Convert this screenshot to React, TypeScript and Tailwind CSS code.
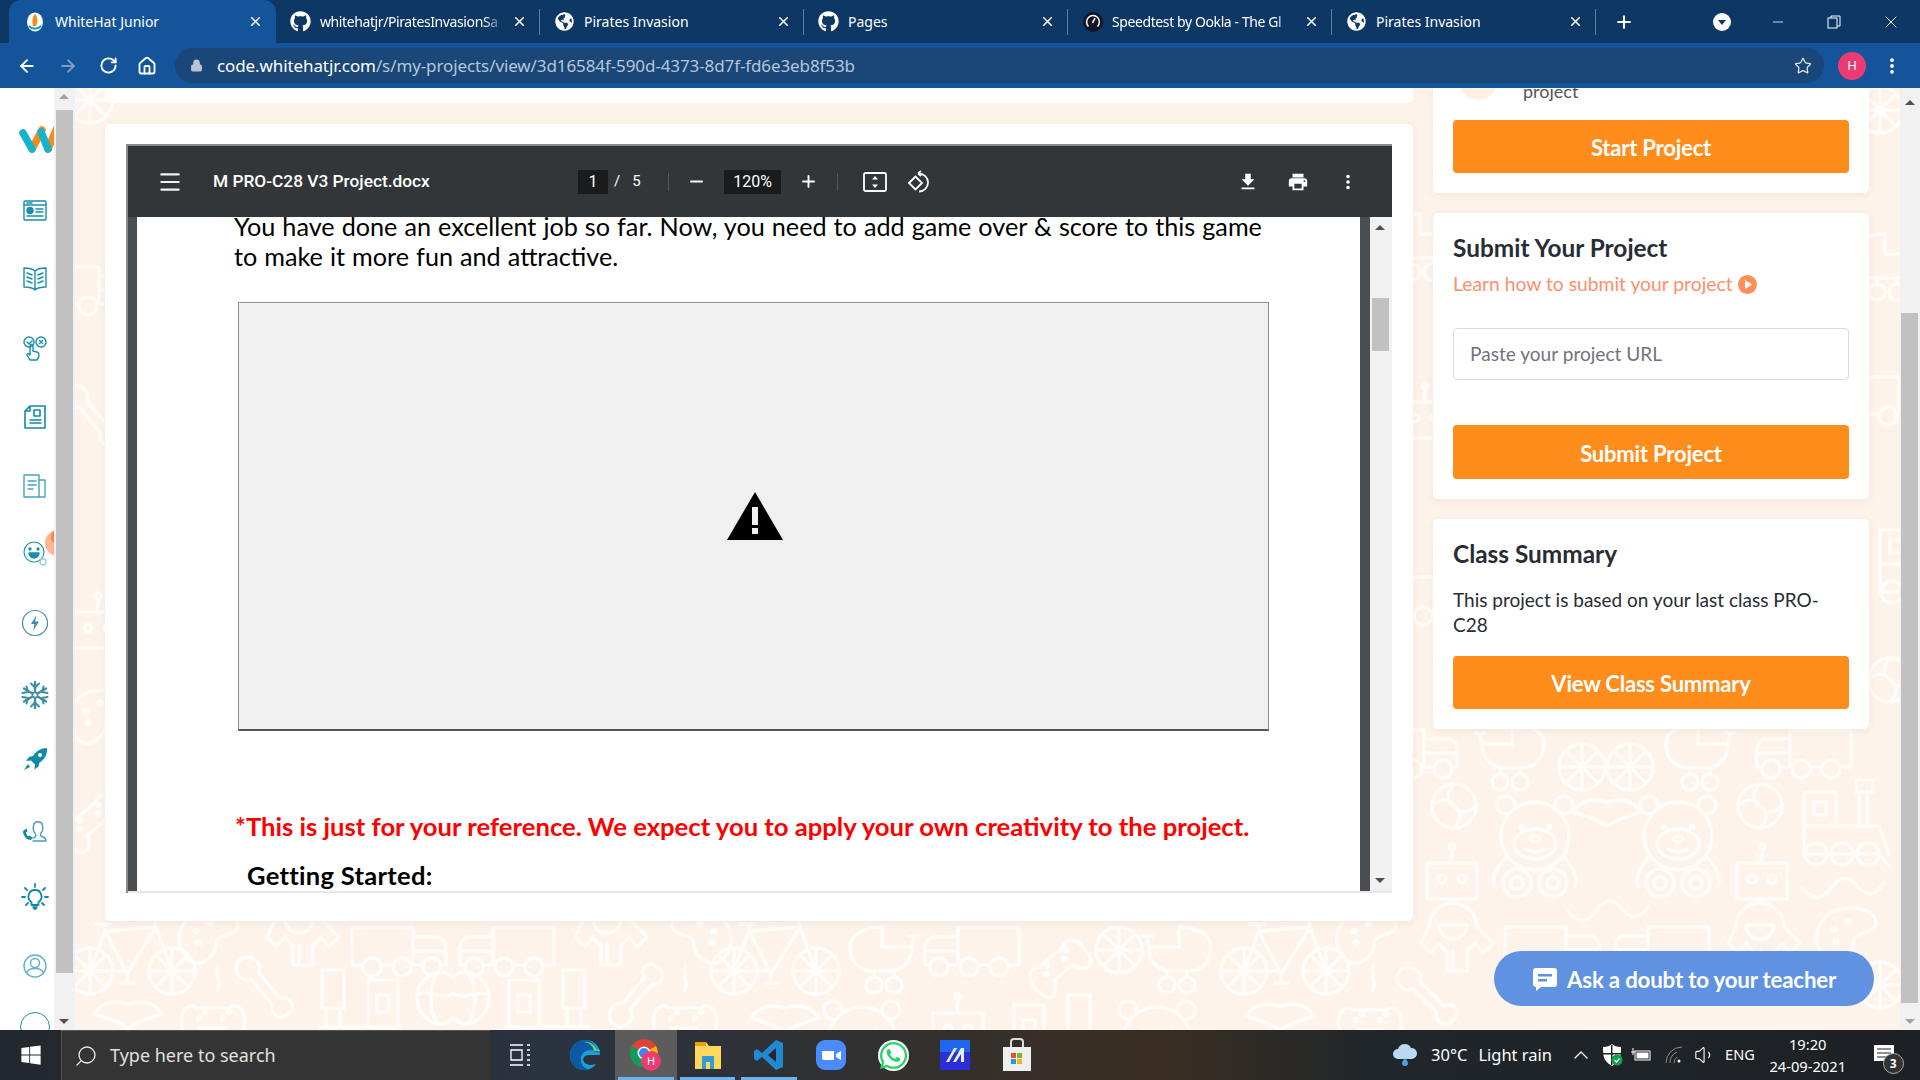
import {
  ArrowLeft,
  ArrowRight,
  ChevronUp,
  Home,
  Lock,
  Menu,
  Minus,
  MoreVertical,
  Plus,
  RotateCw,
  Search,
  Star,
  Volume1,
  X,
} from "lucide-react";
import { FaGithub, FaGlobeAmericas, FaWhatsapp, FaWindows } from "react-icons/fa";
import type { ReactNode } from "react";

const teal = "#1a8fab";

function WhiteHatFavicon() {
  return (
    <svg width="18" height="20" viewBox="0 0 18 20">
      <ellipse cx="9" cy="10" rx="8" ry="9.5" fill="#fff" />
      <path d="M9 2c3 3 3 8 1 12H7C6 10 6 5 9 2z" fill="#f58a1f" />
      <path d="M3 14a8 8 0 0 0 12 0" stroke="#18a2b8" strokeWidth="2" fill="none" />
    </svg>
  );
}

function SpeedtestFavicon() {
  return (
    <svg width="20" height="20" viewBox="0 0 20 20">
      <circle cx="10" cy="10" r="10" fill="#141526" />
      <path d="M5.5 14.5a6.4 6.4 0 1 1 9 0" stroke="#fff" strokeWidth="1.5" fill="none" />
      <path d="M9.4 11.2l2.6-5" stroke="#fff" strokeWidth="1.6" />
    </svg>
  );
}

const tabs: { title: string; icon: ReactNode; fade?: boolean }[] = [
  { title: "whitehatjr/PiratesInvasionSa", icon: <FaGithub size={21} color="#fff" />, fade: true },
  { title: "Pirates Invasion", icon: <FaGlobeAmericas size={19} color="#fff" /> },
  { title: "Pages", icon: <FaGithub size={21} color="#fff" /> },
  { title: "Speedtest by Ookla - The Gl", icon: <SpeedtestFavicon />, fade: true },
  { title: "Pirates Invasion", icon: <FaGlobeAmericas size={19} color="#fff" /> },
];

function BrowserChrome() {
  return (
    <header className="h-[88px] shrink-0 text-white [font-family:'Noto_Sans',sans-serif]">
      <div className="flex h-[43px] items-end bg-[#0d3764] pl-[9px]">
        <div className="flex h-[43px] w-[267px] items-center rounded-t-xl bg-[#14549a] pl-[17px] pr-[13px]">
          <WhiteHatFavicon />
          <span className="ml-[11px] flex-1 text-[14px]">WhiteHat Junior</span>
          <X size={15} strokeWidth={2.5} />
        </div>
        {tabs.map((tab, i) => (
          <div key={i} className="flex h-[43px] w-[264px] items-center pl-[14px]">
            <span className="flex w-[21px] justify-center">{tab.icon}</span>
            <span
              className={
                tab.fade
                  ? "ml-[9px] w-[185px] overflow-hidden whitespace-nowrap text-[14px] tracking-[-0.4px] [mask-image:linear-gradient(90deg,#000_88%,transparent)]"
                  : "ml-[9px] w-[185px] overflow-hidden whitespace-nowrap text-[14px]"
              }
            >
              {tab.title}
            </span>
            <X size={15} strokeWidth={2.5} className="ml-auto" />
            <div className="ml-[12px] h-[26px] w-px shrink-0 bg-[#5f7d9c]" />
          </div>
        ))}
        <div className="flex h-[43px] flex-1 items-center">
          <Plus size={20} strokeWidth={2.5} className="ml-[18px]" />
          <svg width="18" height="18" viewBox="0 0 18 18" className="ml-[79px]">
            <circle cx="9" cy="9" r="9" fill="#fff" />
            <path d="M5 7h8l-4 5z" fill="#0d3764" />
          </svg>
          <Minus size={16} strokeWidth={1.2} className="ml-[39px]" />
          <svg width="14" height="14" viewBox="0 0 14 14" className="ml-[41px]" fill="none" stroke="#fff">
            <rect x="1" y="3" width="9" height="10" />
            <path d="M4 3V1h9v10h-3" />
          </svg>
          <X size={20} strokeWidth={1.2} className="ml-[40px]" />
        </div>
      </div>
      <div className="flex h-[45px] items-center bg-[#14549a] pl-[17px]">
        <ArrowLeft size={20} strokeWidth={2.2} />
        <ArrowRight size={20} strokeWidth={2.2} className="ml-[21px] text-[#7b9ec4]" />
        <RotateCw size={19} strokeWidth={2.4} className="ml-[21px]" />
        <Home size={20} strokeWidth={2.2} className="ml-[19px]" />
        <div className="ml-[18px] flex h-[35px] w-[1649px] items-center rounded-full bg-[#1a4778] pl-[15px] pr-[12px]">
          <Lock size={13} fill="#b9c4d0" color="#b9c4d0" />
          <span className="ml-[14px] text-[17px] tracking-[-0.1px] text-[#b6c6d8]">
            <span className="text-white">code.whitehatjr.com</span>
            /s/my-projects/view/3d16584f-590d-4373-8d7f-fd6e3eb8f53b
          </span>
          <Star size={18} strokeWidth={1.7} className="ml-auto text-[#dfe6ee]" />
        </div>
        <div className="ml-[14px] flex h-[28px] w-[28px] items-center justify-center rounded-full bg-[#ec3b72] text-[13px]">
          H
        </div>
        <MoreVertical size={20} strokeWidth={2.6} className="ml-[16px]" />
      </div>
    </header>
  );
}

/* sidebar line icons, all on a 30 box */
function SideIcon({ children, fill = "none", stroke = teal }: { children: ReactNode; fill?: string; stroke?: string }) {
  return (
    <svg width="30" height="30" viewBox="0 0 30 30" fill={fill} stroke={stroke} strokeWidth="1.4" strokeLinecap="round" strokeLinejoin="round">
      {children}
    </svg>
  );
}

const sideIcons: { top: number; icon: ReactNode }[] = [
  {
    top: 196,
    icon: (
      <SideIcon>
        <rect x="4" y="5" width="22" height="19" rx="1" />
        <path d="M4 9h22M7 7h5M16 13h7M16 16h7M7 20h16" />
        <circle cx="10" cy="14.5" r="3" fill={teal} />
      </SideIcon>
    ),
  },
  {
    top: 263,
    icon: (
      <SideIcon>
        <path d="M15 8C12 5 8 5 4 5v19c4 0 8 0 11 3 3-3 7-3 11-3V5c-4 0-8 0-11 3zM15 8v19" />
        <path d="M7 10l5 2M7 14l5 2M7 18l5 2M23 10l-5 2M23 14l-5 2M23 18l-5 2" />
      </SideIcon>
    ),
  },
  {
    top: 334,
    icon: (
      <SideIcon>
        <circle cx="9" cy="8" r="5" />
        <circle cx="21" cy="8" r="5" />
        <path d="M7 8l2 2 3-3M19.5 6.5l3 3M22.5 6.5l-3 3" />
        <path d="M10 26l-3-5c-.6-1 1-2 2-1l1 1v-9c0-2 3-2 3 0v5l4 1c1 .3 2 1 2 3 0 2-1 4-2 5z" />
      </SideIcon>
    ),
  },
  {
    top: 402,
    icon: (
      <SideIcon stroke="#158aa3">
        <path d="M10 4h15v22H5V9zM10 4v5H5" strokeWidth="1.6" />
        <rect x="14" y="8" width="6" height="6" strokeWidth="1.6" />
        <path d="M10 18h11M10 21h11" strokeWidth="1.6" />
      </SideIcon>
    ),
  },
  {
    top: 471,
    icon: (
      <SideIcon stroke="#43a6bb">
        <path d="M4 4h15v22H4zM19 9h6v17h-6" />
        <path d="M8 10h8M8 14h8M8 18h5" />
      </SideIcon>
    ),
  },
  {
    top: 538,
    icon: (
      <SideIcon>
        <circle cx="14" cy="14" r="10" strokeWidth="1.1" />
        <circle cx="10" cy="11" r="1" fill={teal} />
        <circle cx="18" cy="11" r="1" fill={teal} />
        <path d="M9 15h10a5 5 0 0 1-10 0z" fill={teal} />
        <circle cx="23" cy="24" r="3" stroke="#9ad0dc" />
      </SideIcon>
    ),
  },
  {
    top: 608,
    icon: (
      <SideIcon stroke="#3e8ea6">
        <circle cx="15" cy="15" r="12.5" strokeWidth="1.2" />
        <path d="M16.5 7L11 16h3.5L13 23l6-9.5h-4z" fill="#3e8ea6" stroke="none" />
      </SideIcon>
    ),
  },
  {
    top: 680,
    icon: (
      <SideIcon stroke="#3e8ea6">
        <path d="M15 2v26M4 8.5l22 13M26 8.5l-22 13" strokeWidth="2.4" />
        <path d="M11 3.5l4 4 4-4M11 26.5l4-4 4 4M2.5 13l5.5-1-1.5-5.5M27.5 13L22 12l1.5-5.5M2.5 17L8 18l-1.5 5.5M27.5 17L22 18l1.5 5.5" strokeWidth="2" />
        <circle cx="15" cy="15" r="2.5" fill="#fff" strokeWidth="1.5" />
      </SideIcon>
    ),
  },
  {
    top: 745,
    icon: (
      <SideIcon fill="#0e8aa8" stroke="none">
        <path d="M27 3c-6 0-11 3-14 8l-4 1-3 4 5-.5 4 4-.5 5 4-3 1-4c5-3 8-8 7.5-14.5zM8 19l-4 6 6-3z" />
        <circle cx="20" cy="10" r="2" fill="#fff" />
      </SideIcon>
    ),
  },
  {
    top: 815,
    icon: (
      <SideIcon stroke="#3fa3ba">
        <path d="M13 23c4-1 3-3 2-5-2-2-2-6-1-9 1-3 7-3 8 0 1 3 1 7-1 9-1 2-1 3 2 4 3 1 3 3 3 4H13" />
        <path d="M3 16c0 5 4 9 8 9l1.5-2.5-3-2-1.5 1c-1-1-2-3-2-4l1.5-1-1-3z" fill="#0e8aa8" stroke="none" />
      </SideIcon>
    ),
  },
  {
    top: 882,
    icon: (
      <SideIcon stroke="#0e8aa8">
        <path d="M15 8a6.5 6.5 0 0 0-3.5 12v3h7v-3A6.5 6.5 0 0 0 15 8z" strokeWidth="1.8" />
        <path d="M13 25h4l-1 2h-2z" fill="#0e8aa8" />
        <path d="M15 2v3M5 6l2 2M25 6l-2 2M2 15h3M25 15h3M6 23l2-2M24 23l-2-2" strokeWidth="1.8" />
      </SideIcon>
    ),
  },
  {
    top: 951,
    icon: (
      <SideIcon stroke="#62b2c5">
        <circle cx="15" cy="15" r="11" />
        <circle cx="15" cy="12" r="4.5" />
        <path d="M6.5 22c2-6 15-6 17 0" />
      </SideIcon>
    ),
  },
];

function Sidebar() {
  return (
    <aside className="flex h-full w-[75px] shrink-0 bg-white">
      <div className="relative h-full w-[54px] overflow-hidden">
        <div className="absolute left-[45px] top-[442px] h-[26px] w-[26px] rounded-full bg-[#ffb592]" />
        <div className="absolute left-[51px] top-[442px] h-[14px] w-[12px] rounded-full bg-[#f58a4d]" />
        <svg width="36" height="34" viewBox="0 0 36 34" className="absolute left-[18px] top-[34px]" fill="none" strokeLinecap="round" strokeWidth="7.5">
          <path d="M14 27L24 8" stroke="#f58a1f" />
          <path d="M30 27L39 6" stroke="#f58a1f" />
          <path d="M5 11l9 16" stroke="#14b4cc" />
          <path d="M23 10l7 17" stroke="#14b4cc" />
        </svg>
        {sideIcons.map((item) => (
          <div key={item.top} className="absolute left-[20px]" style={{ top: item.top - 88 }}>
            {item.icon}
          </div>
        ))}
        <div className="absolute left-[20px] top-[924px] h-[30px] w-[30px] rounded-full border-[1.5px] border-[#1a8fab]" />
      </div>
      <Scrollbar thumbTop={22} thumbHeight={863} />
    </aside>
  );
}

function Scrollbar({ thumbTop, thumbHeight }: { thumbTop: number; thumbHeight: number }) {
  return (
    <div className="relative h-full w-[21px] shrink-0 bg-[#f1f1f1]">
      <div className="absolute left-[5px] top-[6px] h-0 w-0 border-x-[5px] border-b-[5px] border-x-transparent border-b-[#a3a3a3]" />
      <div className="absolute left-[2px] w-[17px] bg-[#c1c1c1]" style={{ top: thumbTop, height: thumbHeight }} />
      <div className="absolute bottom-[6px] left-[5px] h-0 w-0 border-x-[5px] border-t-[5px] border-x-transparent border-t-[#505050]" />
    </div>
  );
}

/* background toys */
const Teddy = () => (
  <g>
    <circle cx="-29" cy="-31" r="9" />
    <circle cx="29" cy="-31" r="9" />
    <circle cx="0" cy="0" r="34" fill="#fef3ea" />
    <ellipse cx="0" cy="8" rx="21" ry="15" />
    <ellipse cx="0" cy="3" rx="5" ry="3" />
    <path d="M-9 13c5 4 13 4 18 0" />
    <circle cx="-14" cy="-9" r="1.5" />
    <circle cx="14" cy="-9" r="1.5" />
    <path d="M-28 20c-10 10-16 24-12 30M28 20c10 10 16 24 12 30" />
    <circle cx="-18" cy="47" r="14" />
    <circle cx="18" cy="47" r="14" />
    <circle cx="-18" cy="47" r="6" />
    <circle cx="18" cy="47" r="6" />
  </g>
);
const Robot = () => (
  <g>
    <rect x="-25" y="-18" width="50" height="36" />
    <circle cx="-10" cy="-2" r="4" />
    <circle cx="10" cy="-2" r="4" />
    <path d="M0 -18c-3-6 2-8 0-14" />
    <circle cx="0" cy="-34" r="3" />
  </g>
);
const Ball = () => (
  <g>
    <circle r="22" />
    <path d="M0 -22c-8 8-8 16 0 22 8 6 8 14 0 22M-22 0c8-8 16-8 22 0 6 8 14 8 22 0" />
  </g>
);
const Train = () => (
  <g>
    <rect x="0" y="0" width="32" height="34" />
    <rect x="10" y="10" width="12" height="13" />
    <path d="M0 34v28h75l10 12M55 34V0M63 34V0M52 -12h17v12H52zM32 34h43l10 28" />
    <circle cx="12" cy="62" r="11" />
    <circle cx="38" cy="62" r="11" />
    <circle cx="64" cy="62" r="11" />
  </g>
);
const Stroller = () => (
  <g>
    <path d="M0 -26V-6H30C30 8 20 18 8 18H-10C-24 18-32 6-32-6C-32-18-18-26 0-26Z" />
    <path d="M30 -6L32 -16M27 -17H37M-8 18v6M12 18v6" />
    <circle cx="-8" cy="32" r="8" />
    <circle cx="12" cy="32" r="8" />
  </g>
);
const Wheel = ({ r = 23 }: { r?: number }) => (
  <g>
    <circle r={r} />
    <path d={`M${-r} 0H${r}M0 ${-r}V${r}M${-r * 0.7} ${-r * 0.7}L${r * 0.7} ${r * 0.7}M${r * 0.7} ${-r * 0.7}L${-r * 0.7} ${r * 0.7}`} />
  </g>
);
const Bike = () => (
  <g>
    <g transform="translate(-41 0)"><Wheel /></g>
    <g transform="translate(41 0)"><Wheel /></g>
    <path d="M-41 0L-26 -40L25 -44L41 0M-26 -40L-4 3L25 -44M-36 -47H-20M-26 -40V-47M25 -44L23 -52M-4 3V11M-10 12H3M-41 0H-4" />
  </g>
);
const Truck = () => (
  <g>
    <path d="M-47 14V-23H14V14M14 -14H36C43 -14 47 -10 47 -3V14M14 0H47M-47 14H47" />
    <circle cx="-27" cy="16" r="9" fill="#fef3ea" />
    <circle cx="3" cy="16" r="9" fill="#fef3ea" />
    <circle cx="33" cy="16" r="9" fill="#fef3ea" />
  </g>
);
const Creature = () => (
  <g>
    <path d="M-24 10a24 24 0 0 1 48 0l16 16-10 10-8-10c-4 6-8 8-8 8v20h-20V34s-4-2-8-8l-8 10-10-10z" />
    <path d="M-14 8h28a14 14 0 0 1-28 0zM0 34v20" />
  </g>
);
const Palette = () => (
  <g>
    <path d="M-20 26c-20-14-12-46 14-50 20-4 34 4 34 14 0 12-24 8-22 20 1 8-14 24-26 16z" />
    <circle cx="-14" cy="-4" r="2" />
    <circle cx="0" cy="-12" r="2" />
    <circle cx="-12" cy="8" r="2" />
  </g>
);
const Gamepad = ({ angle = -40 }: { angle?: number }) => (
  <g transform={`rotate(${angle})`}>
    <path d="M-30 14c-6-24 8-30 14-24h32c6-6 20 0 14 24-2 12-14 8-18-4h-24c-4 12-16 16-18 4z" />
    <circle cx="10" cy="0" r="1.5" />
    <circle cx="16" cy="-6" r="1.5" />
    <circle cx="-14" cy="0" r="1.5" />
    <circle cx="-8" cy="-6" r="1.5" />
  </g>
);
const Cord = () => <path d="M0 -24c-4 8 4 12 0 24" />;
const Bone = ({ angle = 50 }: { angle?: number }) => (
  <g transform={`rotate(${angle})`}>
    <path d="M-20 -6h34c2-10 18-8 16 4 2 12-14 14-16 6h-34c-4 12-22 8-22-4 0-12 18-16 22-6z" />
  </g>
);
const Bat = () => (
  <g>
    <path d="M-34 2c8-12 20-14 34-10 14-4 26-2 34 10-12 4-22 6-34 14-12-8-22-10-34-14z" />
  </g>
);
const Squiggle = () => <path d="M-40 0c10 14 20 14 30 0s18-10 26 0 18 8 26-4" />;
const Tower = () => (
  <g>
    <rect x="0" y="0" width="22" height="38" />
    <path d="M4 38V57M18 38V57M-4 57H80" />
    <rect x="46" y="10" width="30" height="47" />
    <rect x="55" y="25" width="12" height="17" />
  </g>
);
const Pumpkin = () => (
  <path d="M-36 0c0-16 14-26 24-26 5 0 9 3 12 6 3-3 7-6 12-6 10 0 24 10 24 26s-14 26-24 26c-5 0-9-3-12-6-3 3-7 6-12 6-10 0-24-10-24-26zM-16 -24c-8 12-8 36 0 48M16 -24c8 12 8 36 0 48M-34 -4c10-4 20 6 34 0 14 6 24-4 34 0" />
);

type Toy = [ReactNode, number, number, boolean?];
const toys: Toy[] = [
  /* right column, big area under the cards */
  [<Truck />, 1410, 753],
  [<Stroller />, 1512, 750, true],
  [<Wheel />, 1582, 767],
  [<Wheel />, 1630, 767],
  [<Stroller />, 1698, 750],
  [<Truck />, 1804, 753, true],
  [<Ball />, 1454, 806],
  [<Teddy />, 1535, 836],
  [<Bat />, 1607, 810],
  [<Teddy />, 1678, 836],
  [<Ball />, 1760, 806],
  [<Train />, 1804, 792],
  [<Robot />, 1452, 881],
  [<Robot />, 1762, 881],
  [<Squiggle />, 1842, 887],
  [<Squiggle />, 1607, 910],
  [<Creature />, 1453, 917],
  [<Creature />, 1760, 917],
  [<Palette />, 1848, 933],
  [<Truck />, 1552, 950],
  [<Truck />, 1662, 950, true],
  [<Bone angle={45} />, 1430, 1000],
  [<Wheel />, 1880, 985],
  /* bottom strip, first row */
  [<Bike />, 131, 971],
  [<Palette />, 210, 935],
  [<Creature />, 299, 911],
  [<Truck />, 399, 951],
  [<Truck />, 507, 951, true],
  [<Creature />, 607, 911],
  [<Palette />, 700, 935, true],
  [<Bike />, 775, 971],
  [<Stroller />, 882, 953],
  [<Truck />, 972, 951, true],
  [<Gamepad />, 1057, 965],
  [<Wheel />, 1119, 950],
  [<Stroller />, 1179, 953, true],
  [<Bike />, 1285, 971],
  [<Palette />, 1368, 935],
  /* bottom strip, second row */
  [<Bat />, 128, 1012],
  [<Cord />, 218, 990],
  [<Gamepad angle={0} />, 213, 1018],
  [<Bone />, 267, 992],
  [<Tower />, 322, 970],
  [<Pumpkin />, 453, 998],
  [<Tower />, 585, 970, true],
  [<Bone angle={-50} />, 640, 992],
  [<Cord />, 685, 990],
  [<Gamepad angle={0} />, 685, 1018],
  [<Bat />, 785, 1016],
  [<Teddy />, 862, 1041],
  [<Robot />, 958, 1031],
  [<Tower />, 1090, 995, true],
  [<Teddy />, 1157, 1041],
  [<Bat />, 1280, 1014],
  [<Cord />, 1373, 990],
  [<Gamepad angle={0} />, 1370, 1020],
  /* side strips */
  [<Wheel />, 90, 100],
  [<Truck />, 85, 290],
  [<Bone />, 95, 420],
  [<Robot />, 98, 630],
  [<Palette />, 100, 715],
  [<Gamepad />, 90, 820],
  [<Stroller />, 1420, 240],
  [<Robot />, 1425, 420],
  [<Truck />, 1420, 600],
  [<Wheel />, 1880, 110],
  [<Stroller />, 1885, 260],
  [<Truck />, 1885, 400],
  [<Train />, 1880, 530],
  [<Ball />, 1890, 680],
];

function ToyBackground() {
  return (
    <svg width="1825" height="942" viewBox="75 88 1825 942" className="absolute left-0 top-0" fill="none" stroke="#fffcf9" strokeWidth="3.5" strokeLinecap="round" strokeLinejoin="round">
      {toys.map(([toy, x, y, flip], i) => (
        <g key={i} transform={`translate(${x} ${y})${flip ? " scale(-1 1)" : ""}`}>
          {toy}
        </g>
      ))}
    </svg>
  );
}

function PdfIcon({ children, width = 22 }: { children: ReactNode; width?: number }) {
  return (
    <svg width={width} height="22" viewBox="0 0 24 24" fill="#fff">
      {children}
    </svg>
  );
}

function PdfViewer() {
  return (
    <div className="flex h-[749px] flex-col border-t-2 border-l-2 border-[#8a8a8a] bg-[#f1f1f1]">
      <div className="flex h-[71px] shrink-0 items-center bg-[#323639] pl-[29px] text-white [font-family:Roboto,sans-serif]">
        <Menu size={26} strokeWidth={2} className="text-[#f1f1f1]" />
        <span className="ml-[30px] w-[365px] text-[17.3px] font-medium">M PRO-C28 V3 Project.docx</span>
        <span className="flex h-[24px] w-[30px] items-center justify-center bg-[#191b1c] text-[16px]">1</span>
        <span className="ml-[6px] text-[15px]">/</span>
        <span className="ml-[12px] w-[36px] text-[15px]">5</span>
        <span className="h-[18px] w-px bg-[#55585b]" />
        <Minus size={19} strokeWidth={2.4} className="ml-[18px]" />
        <span className="ml-[18px] flex h-[24px] w-[57px] items-center justify-center bg-[#191b1c] text-[16px]">120%</span>
        <Plus size={19} strokeWidth={2.4} className="ml-[18px]" />
        <span className="ml-[19px] h-[18px] w-px bg-[#55585b]" />
        <svg width="24" height="20" viewBox="0 0 24 20" className="ml-[25px]" fill="none" stroke="#fff" strokeWidth="1.8">
          <rect x="1" y="1" width="22" height="18" rx="1.5" />
          <path d="M12 4l3 3.5H9zM12 16l3-3.5H9z" fill="#fff" stroke="none" />
        </svg>
        <svg width="24" height="24" viewBox="0 0 24 24" className="ml-[20px]" fill="none" stroke="#fff" strokeWidth="1.8">
          <path d="M2 13l6.5-6.5L15 13l-6.5 6.5z" />
          <path d="M11 3.5c6 0 10 4 10 9s-4 9-9 9M11 3.5l3-2.5M11 3.5l3 2.5" />
        </svg>
        <span className="ml-[306px]">
          <PdfIcon>
            <path d="M19 9h-4V3H9v6H5l7 7zM5 18v2h14v-2z" />
          </PdfIcon>
        </span>
        <span className="ml-[27px]">
          <PdfIcon width={24}>
            <path d="M19 8H5a3 3 0 0 0-3 3v6h4v4h12v-4h4v-6a3 3 0 0 0-3-3zm-3 11H8v-5h8zm3-7a1 1 0 1 1 0-2 1 1 0 0 1 0 2zM18 3H6v4h12z" />
          </PdfIcon>
        </span>
        <span className="ml-[27px]">
          <PdfIcon>
            <path d="M12 8a2 2 0 1 0 0-4 2 2 0 0 0 0 4zm0 2a2 2 0 1 0 0 4 2 2 0 0 0 0-4zm0 6a2 2 0 1 0 0 4 2 2 0 0 0 0-4z" />
          </PdfIcon>
        </span>
      </div>
      <div className="flex min-h-0 flex-1 border-b-2 border-[#e8e8e8]">
        <div className="w-[9px] shrink-0 bg-[#4a4d51]" />
        <div className="min-w-0 w-[1223px] shrink-0 overflow-hidden bg-white pl-[97px] text-black [font-family:Lato,sans-serif]">
          <p className="-mt-[6px] w-[1040px] text-[25.2px] leading-[30px] [word-spacing:0.6px]">
            You have done an excellent job so far. Now, you need to add game over &amp; score to this game to make it more fun and attractive.
          </p>
          <div className="ml-[4px] mt-[31px] flex h-[429px] w-[1031px] items-center justify-center border border-[#8f8f8f] border-b-2 border-b-[#555] bg-[#f0f0f0]">
            <svg width="56" height="48" viewBox="0 0 56 48" className="ml-[3px]">
              <path d="M28 0L56 48H0z" fill="#000" />
              <rect x="25" y="15" width="6" height="18" fill="#f0f0f0" />
              <rect x="25" y="36" width="6" height="6" fill="#f0f0f0" />
            </svg>
          </div>
          <p className="ml-[1px] mt-[80px] whitespace-nowrap text-[25.65px] font-bold leading-[30px] text-[#ff0000]">
            *This is just for your reference. We expect you to apply your own creativity to the project.
          </p>
          <p className="ml-[13px] mt-[19px] text-[25.5px] font-bold leading-[30px] tracking-[0.3px]">Getting Started:</p>
        </div>
        <div className="w-[10px] shrink-0 bg-[#4a4d51]" />
        <div className="relative w-[22px] shrink-0 bg-[#f1f1f1]">
          <div className="absolute left-[5px] top-[8px] h-0 w-0 border-x-[5px] border-b-[5px] border-x-transparent border-b-[#505050]" />
          <div className="absolute left-[2px] top-[81px] h-[53px] w-[17px] bg-[#c1c1c1]" />
          <div className="absolute bottom-[8px] left-[5px] h-0 w-0 border-x-[5px] border-t-[5px] border-x-transparent border-t-[#505050]" />
        </div>
      </div>
    </div>
  );
}

function OrangeButton({ label, height }: { label: string; height: string }) {
  return (
    <button className={`${height} w-[396px] rounded-[4px] bg-[#ff8d1c] pt-[2px] text-[22px] font-bold tracking-[-0.2px] text-white`}>
      {label}
    </button>
  );
}

function RightColumn() {
  return (
    <div className="flex w-[436px] shrink-0 flex-col gap-[20px] text-[#282c34] [font-family:Lato,sans-serif]">
      <section className="relative h-[105px] overflow-hidden rounded-b-[5px] bg-white px-[20px] pt-[32px] shadow-[0_2px_8px_rgba(200,170,150,0.2)]">
        <div className="absolute left-[26px] top-[-26px] h-[38px] w-[38px] rounded-full bg-[#fff0e4]" />
        <span className="absolute left-[90px] top-[-10px] text-[18px] text-[#555]">project</span>
        <OrangeButton label="Start Project" height="h-[53px]" />
      </section>
      <section className="h-[286px] rounded-[5px] bg-white px-[20px] pt-[20px] shadow-[0_2px_8px_rgba(200,170,150,0.2)]">
        <h2 className="text-[24.4px] font-bold leading-[30px]">Submit Your Project</h2>
        <div className="mt-[8px] flex items-center text-[19.3px] leading-[26px] text-[#ff8f6a]">
          Learn how to submit your project
          <svg width="19" height="19" viewBox="0 0 19 19" className="ml-[5px]">
            <circle cx="9.5" cy="9.5" r="9.5" fill="#ff8f57" />
            <path d="M7 5l7 4.5L7 14z" fill="#fff" />
          </svg>
        </div>
        <div className="mt-[31px] flex h-[52px] items-center rounded-[4px] border border-[#dcdcdc] pl-[16px] text-[19.1px] text-[#6f7380]">
          Paste your project URL
        </div>
        <div className="mt-[45px]">
          <OrangeButton label="Submit Project" height="h-[54px]" />
        </div>
      </section>
      <section className="h-[210px] rounded-[5px] bg-white px-[20px] pt-[20px] shadow-[0_2px_8px_rgba(200,170,150,0.2)]">
        <h2 className="text-[24.4px] font-bold leading-[30px]">Class Summary</h2>
        <p className="mt-[18px] text-[19px] leading-[25px]">This project is based on your last class PRO-C28</p>
        <div className="mt-[19px]">
          <OrangeButton label="View Class Summary" height="h-[53px]" />
        </div>
      </section>
    </div>
  );
}

function Content() {
  return (
    <div className="relative min-w-0 flex-1 overflow-hidden bg-[#fef3ea]">
      <ToyBackground />
      <div className="relative flex gap-[20px] pl-[30px]">
        <div className="flex w-[1308px] shrink-0 flex-col gap-[21px]">
          <div className="h-[15px] rounded-b-[5px] bg-white" />
          <div className="h-[797px] rounded-[5px] bg-white pl-[21px] pr-[21px] pt-[20px] shadow-[0_2px_8px_rgba(200,170,150,0.2)]">
            <PdfViewer />
          </div>
        </div>
        <RightColumn />
      </div>
      <button className="absolute left-[1419px] top-[863px] flex h-[55px] w-[380px] items-center rounded-full bg-[#6092e2] pl-[38px] pt-[2px] text-[22.3px] font-bold tracking-[-0.2px] text-white [font-family:Lato,sans-serif]">
        <svg width="26" height="25" viewBox="0 0 26 25" className="mr-[9px]">
          <path d="M4 1h18a3 3 0 0 1 3 3v13a3 3 0 0 1-3 3H9l-5 4v-4a3 3 0 0 1-3-3V4a3 3 0 0 1 3-3z" fill="#fff" />
          <path d="M6 7h14v2.5H6zM6 12h9v2.5H6z" fill="#6092e2" />
        </svg>
        Ask a doubt to your teacher
      </button>
    </div>
  );
}

function ChromeGlyph() {
  return (
    <svg width="32" height="36" viewBox="0 0 32 36">
      <circle cx="14" cy="16" r="14" fill="#db4437" />
      <path d="M14 16L26 9a14 14 0 0 1-8 20z" fill="#f4b400" />
      <path d="M14 16L2 9a14 14 0 0 0 14 21z" fill="#0f9d58" />
      <circle cx="14" cy="16" r="6.5" fill="#fff" />
      <circle cx="14" cy="16" r="5" fill="#4285f4" />
      <circle cx="21" cy="24" r="10" fill="#ec3b72" />
      <text x="21" y="28" fontSize="11" textAnchor="middle" fill="#fff" fontFamily="Noto Sans, sans-serif">H</text>
    </svg>
  );
}

const taskIcons: { w: number; node: ReactNode; active?: boolean; line?: boolean }[] = [
  {
    w: 61,
    node: (
      <svg width="32" height="32" viewBox="0 0 32 32">
        <path d="M16 1C7 1 1 8 1 16c0 9 7 15 14 15 5 0 9-2 12-6-3 1-9 2-12-2-2-3 0-7 5-7h11C31 7 25 1 16 1z" fill="#1d9ed9" />
        <path d="M1 16c0 9 7 15 14 15 1 0 3 0 4-1-4-1-8-5-7-11 0-4 4-8 9-8s8 3 8 3C27 5 22 1 16 1 7 1 1 8 1 16z" fill="#0c5aa6" />
        <path d="M28 11c-2-6-8-9-14-8 6 0 10 4 11 9h6c0-1-1-2-3-1z" fill="#5fd07f" />
      </svg>
    ),
  },
  { w: 62, active: true, line: true, node: <ChromeGlyph /> },
  {
    w: 61,
    line: true,
    node: (
      <svg width="30" height="30" viewBox="0 0 30 30">
        <path d="M2 2h11l3 4h12v23H2z" fill="#ffd75e" />
        <path d="M2 2h11v4H2z" fill="#e8a20c" />
        <path d="M9 16h12v13H9z" fill="#2f9bd9" />
        <path d="M13 22h4v7h-4z" fill="#ffd75e" />
      </svg>
    ),
  },
  {
    w: 62,
    line: true,
    node: (
      <svg width="30" height="32" viewBox="0 0 30 32">
        <path d="M22 1l7 3v24l-7 3L8 18l-5 4-3-2v-8l3-2 5 4z" fill="#1f8ad2" />
        <path d="M22 9l-8 7 8 7z" fill="#22282d" />
      </svg>
    ),
  },
  {
    w: 62,
    node: (
      <svg width="30" height="30" viewBox="0 0 30 30">
        <rect width="30" height="30" rx="9" fill="#4a8cff" />
        <path d="M6 11h12v9H8a2 2 0 0 1-2-2zM20 14l5-3v9l-5-3z" fill="#fff" />
      </svg>
    ),
  },
  {
    w: 62,
    node: (
      <span className="flex h-[31px] w-[31px] items-center justify-center rounded-full bg-[#fff] text-[#25d366]">
        <FaWhatsapp size={31} />
      </span>
    ),
  },
  {
    w: 62,
    node: (
      <svg width="30" height="30" viewBox="0 0 30 30">
        <rect width="30" height="30" fill="#2b2fd8" />
        <rect width="30" height="12" fill="#2166ee" />
        <path d="M6 22L14 8h3l-8 14zM13 22L21 8h3v14h-3V14l-5 8z" fill="#e8ecff" />
      </svg>
    ),
  },
  {
    w: 61,
    node: (
      <svg width="30" height="34" viewBox="0 0 30 34">
        <path d="M1 9h28v24H1z" fill="#eeeeee" />
        <path d="M9 9V4a3 3 0 0 1 3-3h6a3 3 0 0 1 3 3v5" stroke="#ddd" strokeWidth="2" fill="none" />
        <rect x="9" y="15" width="5" height="5" fill="#e6502a" />
        <rect x="15" y="15" width="5" height="5" fill="#7cb82f" />
        <rect x="9" y="21" width="5" height="5" fill="#1c9ce5" />
        <rect x="15" y="21" width="5" height="5" fill="#f5b60c" />
      </svg>
    ),
  },
];

function Taskbar() {
  return (
    <footer className="flex h-[50px] shrink-0 items-center bg-[linear-gradient(90deg,#22282d_0%,#2a3340_30%,#3a2e22_60%,#20262b_72%,#1d2125_100%)] text-white [font-family:'Noto_Sans',sans-serif]">
      <div className="flex w-[61px] justify-center">
        <FaWindows size={22} />
      </div>
      <div className="flex h-[50px] w-[429px] items-center border border-[#555] border-b-0 border-r-0 bg-[#343434] pl-[12px]">
        <Search size={24} strokeWidth={1.3} className="-scale-x-100 text-[#eee]" />
        <span className="ml-[12px] text-[18px] text-[#e4e0dc]">Type here to search</span>
      </div>
      <div className="flex w-[64px] justify-center pr-[4px]">
        <svg width="22" height="22" viewBox="0 0 22 22" fill="none" stroke="#fff" strokeWidth="1.3">
          <path d="M1 1h13M1 21h13M2 6h11v10H2zM18 1h3M18 6h3M18 11h3M18 16h3M18 21h3" />
        </svg>
      </div>
      {taskIcons.map((item, i) => (
        <div
          key={i}
          className={`relative flex h-[50px] items-center justify-center ${item.active ? "bg-[#5c5c5c]" : ""}`}
          style={{ width: item.w }}
        >
          {item.node}
          {item.line && <div className="absolute bottom-0 left-[3px] right-[3px] h-[3px] bg-[#6bb2f0]" />}
        </div>
      ))}
      <div className="ml-[345px] flex items-center">
        <svg width="26" height="22" viewBox="0 0 26 22">
          <path d="M6 15a5 5 0 0 1 0-10 7 7 0 0 1 13-1 5.5 5.5 0 0 1 1 11z" fill="#bcd9f3" />
          <path d="M13 14c2 2.5 3 4 3 5a3 3 0 0 1-6 0c0-1 1-2.5 3-5z" fill="#4ba3e3" />
        </svg>
        <span className="ml-[13px] text-[16.5px]">30°C</span>
        <span className="ml-[11px] text-[16.5px]">Light rain</span>
        <ChevronUp size={24} strokeWidth={1.3} className="ml-[17px]" />
        <svg width="22" height="22" viewBox="0 0 22 22" className="ml-[8px]">
          <path d="M2 3c4 0 7-1 9-3 2 2 5 3 9 3 0 8 0 14-9 19C2 17 2 11 2 3z" fill="#fff" />
          <path d="M10 1h1.5v20H10zM2 9h18v1.5H2z" fill="#222" />
          <circle cx="16" cy="16" r="5.5" fill="#12a150" />
          <path d="M13.5 16l2 2 3-3.5" stroke="#fff" strokeWidth="1.2" fill="none" />
        </svg>
        <svg width="20" height="14" viewBox="0 0 20 14" className="ml-[8px]" fill="none" stroke="#fff">
          <rect x="4" y="3" width="15" height="9" />
          <rect x="6" y="5" width="11" height="5" fill="#fff" />
          <path d="M0 4h4M2 0v7" />
        </svg>
        <svg width="18" height="18" viewBox="0 0 18 18" className="ml-[14px]" fill="none" stroke="#8b8b8b">
          <path d="M1 17A16 16 0 0 1 17 1M5 17A12 12 0 0 1 12 6M9 17a8 8 0 0 1 3-6" />
          <circle cx="14" cy="15" r="1.5" fill="#fff" stroke="none" />
        </svg>
        <Volume1 size={22} strokeWidth={1.2} className="ml-[11px]" />
        <span className="ml-[9px] text-[14.5px]">ENG</span>
      </div>
      <div className="ml-[8px] flex w-[90px] flex-col items-center text-[14.7px] leading-[22px]">
        <span>19:20</span>
        <span>24-09-2021</span>
      </div>
      <div className="relative ml-[21px]">
        <svg width="20" height="20" viewBox="0 0 20 20">
          <path d="M0 0h20v16H0z" fill="#fff" />
          <path d="M3 4h14M3 8h14M3 12h10" stroke="#222" strokeWidth="1.2" />
        </svg>
        <span className="absolute left-[9px] top-[8px] flex h-[21px] w-[21px] items-center justify-center rounded-full border border-[#aaa] bg-[#333] text-[12px] font-bold">
          3
        </span>
      </div>
    </footer>
  );
}

export default function App() {
  return (
    <div className="flex h-[1080px] w-[1920px] flex-col overflow-hidden">
      <BrowserChrome />
      <div className="flex min-h-0 flex-1">
        <Sidebar />
        <Content />
        <div className="relative h-full w-[20px] shrink-0 bg-[#f1f1f1]">
          <div className="absolute left-[5px] top-[12px] h-0 w-0 border-x-[5px] border-b-[5px] border-x-transparent border-b-[#505050]" />
          <div className="absolute left-[1px] top-[225px] h-[690px] w-[17px] bg-[#c1c1c1]" />
          <div className="absolute bottom-[6px] left-[5px] h-0 w-0 border-x-[5px] border-t-[5px] border-x-transparent border-t-[#a3a3a3]" />
        </div>
      </div>
      <Taskbar />
    </div>
  );
}
